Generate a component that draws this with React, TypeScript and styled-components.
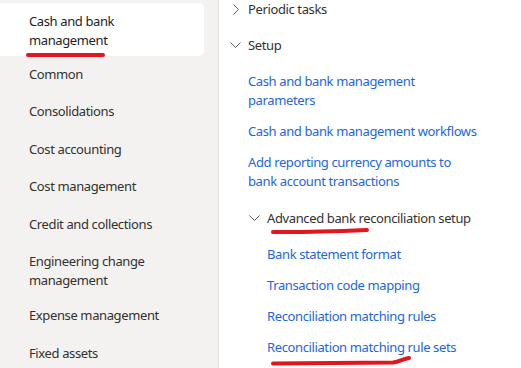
import React from 'react';
import styled, { createGlobalStyle } from 'styled-components';

const GlobalStyle = createGlobalStyle`
  html, body {
    margin: 0;
    padding: 0;
    background: #ffffff;
    font-family: "Noto Sans", "Open Sans", sans-serif;
    font-size: 13px;
    letter-spacing: -0.38px;
    color: #323130;
  }
`;

const modules = [
    ['Common'],
    ['Consolidations'],
    ['Cost accounting'],
    ['Cost management'],
    ['Credit and collections'],
    ['Engineering change', 'management'],
    ['Expense management'],
    ['Fixed assets'],
];

const Chevron = ({ open }: { open?: boolean }) => (
    <ChevronBox>
        {open ? (
            <svg width="11" height="6" viewBox="0 0 11 6">
                <path d="M0.5 0.5 L5.5 5.5 L10.5 0.5" fill="none" stroke="#605e5c" strokeWidth="1" />
            </svg>
        ) : (
            <svg width="6" height="11" viewBox="0 0 6 11">
                <path d="M0.5 0.5 L5.5 5.5 L0.5 10.5" fill="none" stroke="#605e5c" strokeWidth="1" />
            </svg>
        )}
    </ChevronBox>
);

const Scribble = ({ left, top, width, height, d }: { left: number; top: number; width: number; height: number; d: string }) => (
    <Mark $left={left} $top={top} width={width} height={height} viewBox={`0 0 ${width} ${height}`}>
        <path d={d} fill="none" stroke="#e3161f" strokeWidth="4" strokeLinecap="round" strokeLinejoin="round" />
    </Mark>
);

export default function App() {
    return (
        <>
            <GlobalStyle />
            <Page>
                <Nav>
                    <SelectedItem>
                        <div>Cash and bank</div>
                        <div>management</div>
                        <Scribble left={26} top={47.5} width={80} height={8} d="M2 4 L77 4" />
                    </SelectedItem>
                    {modules.map((lines) => (
                        <NavItem key={lines[0]} $multi={lines.length > 1}>
                            {lines.map((l) => <div key={l}>{l}</div>)}
                        </NavItem>
                    ))}
                </Nav>
                <Content>
                    <TreeRow $level={0}>
                        <Chevron />
                        <span>Periodic tasks</span>
                    </TreeRow>
                    <TreeRow $level={0}>
                        <Chevron open />
                        <span>Setup</span>
                    </TreeRow>
                    <LinkGroup>
                        <LinkRow $level={0}>Cash and bank management<br />parameters</LinkRow>
                        <LinkRow $level={0}>Cash and bank management workflows</LinkRow>
                        <LinkRow $level={0}>Add reporting currency amounts to<br />bank account transactions</LinkRow>
                    </LinkGroup>
                    <TreeRow $level={1}>
                        <Chevron open />
                        <span>Advanced bank reconciliation setup</span>
                        <Scribble left={52} top={27} width={98} height={8} d="M2 5 C30 5.5 60 4.5 96 3" />
                    </TreeRow>
                    <LinkGroup>
                        <LinkRow $level={1}>Bank statement format</LinkRow>
                        <LinkRow $level={1}>Transaction code mapping</LinkRow>
                        <LinkRow $level={1}>Reconciliation matching rules</LinkRow>
                        <LinkRow $level={1}>
                            Reconciliation matching rule sets
                            <Scribble left={52} top={22} width={140} height={12} d="M2 9.5 L122 8.5 C128 8 132 5 138 4" />
                        </LinkRow>
                    </LinkGroup>
                </Content>
            </Page>
        </>
    );
}

const Page = styled.div`
  display: flex;
  width: 521px;
  height: 368px;
  overflow: hidden;
`;

const Nav = styled.div`
  width: 218px;
  flex-shrink: 0;
  background: #f3f2f1;
  border-right: 1px solid #e1dfdd;
  line-height: 19px;
`;

const NavItem = styled.div<{ $multi?: boolean }>`
  padding: 9.25px 0 ${(p) => (p.$multi ? 6.75 : 9.25)}px 29px;
  color: #323130;
`;

const SelectedItem = styled.div`
  position: relative;
  margin: 3px 14px 0 0;
  padding: 9px 0 5.5px 29px;
  background: #ffffff;
  border-radius: 0 5px 5px 0;
  color: #201f1e;
`;

const Content = styled.div`
  flex: 1;
  margin-top: -9px;
  line-height: 19px;
`;

const TreeRow = styled.div<{ $level: number }>`
  position: relative;
  display: flex;
  align-items: center;
  height: 36px;
  padding-left: ${(p) => 11 + p.$level * 19}px;
  color: #323130;
`;

const ChevronBox = styled.span`
  display: inline-flex;
  align-items: center;
  justify-content: center;
  width: 11px;
  height: 12px;
  margin-right: 7px;
`;

const LinkGroup = styled.div`
  padding: 3px 0;
`;

const LinkRow = styled.div<{ $level: number }>`
  position: relative;
  padding: 6px 0 6px ${(p) => 29 + p.$level * 19}px;
  color: #2266e3;
`;

const Mark = styled.svg<{ $left: number; $top: number }>`
  position: absolute;
  left: ${(p) => p.$left}px;
  top: ${(p) => p.$top}px;
  overflow: visible;
`;
